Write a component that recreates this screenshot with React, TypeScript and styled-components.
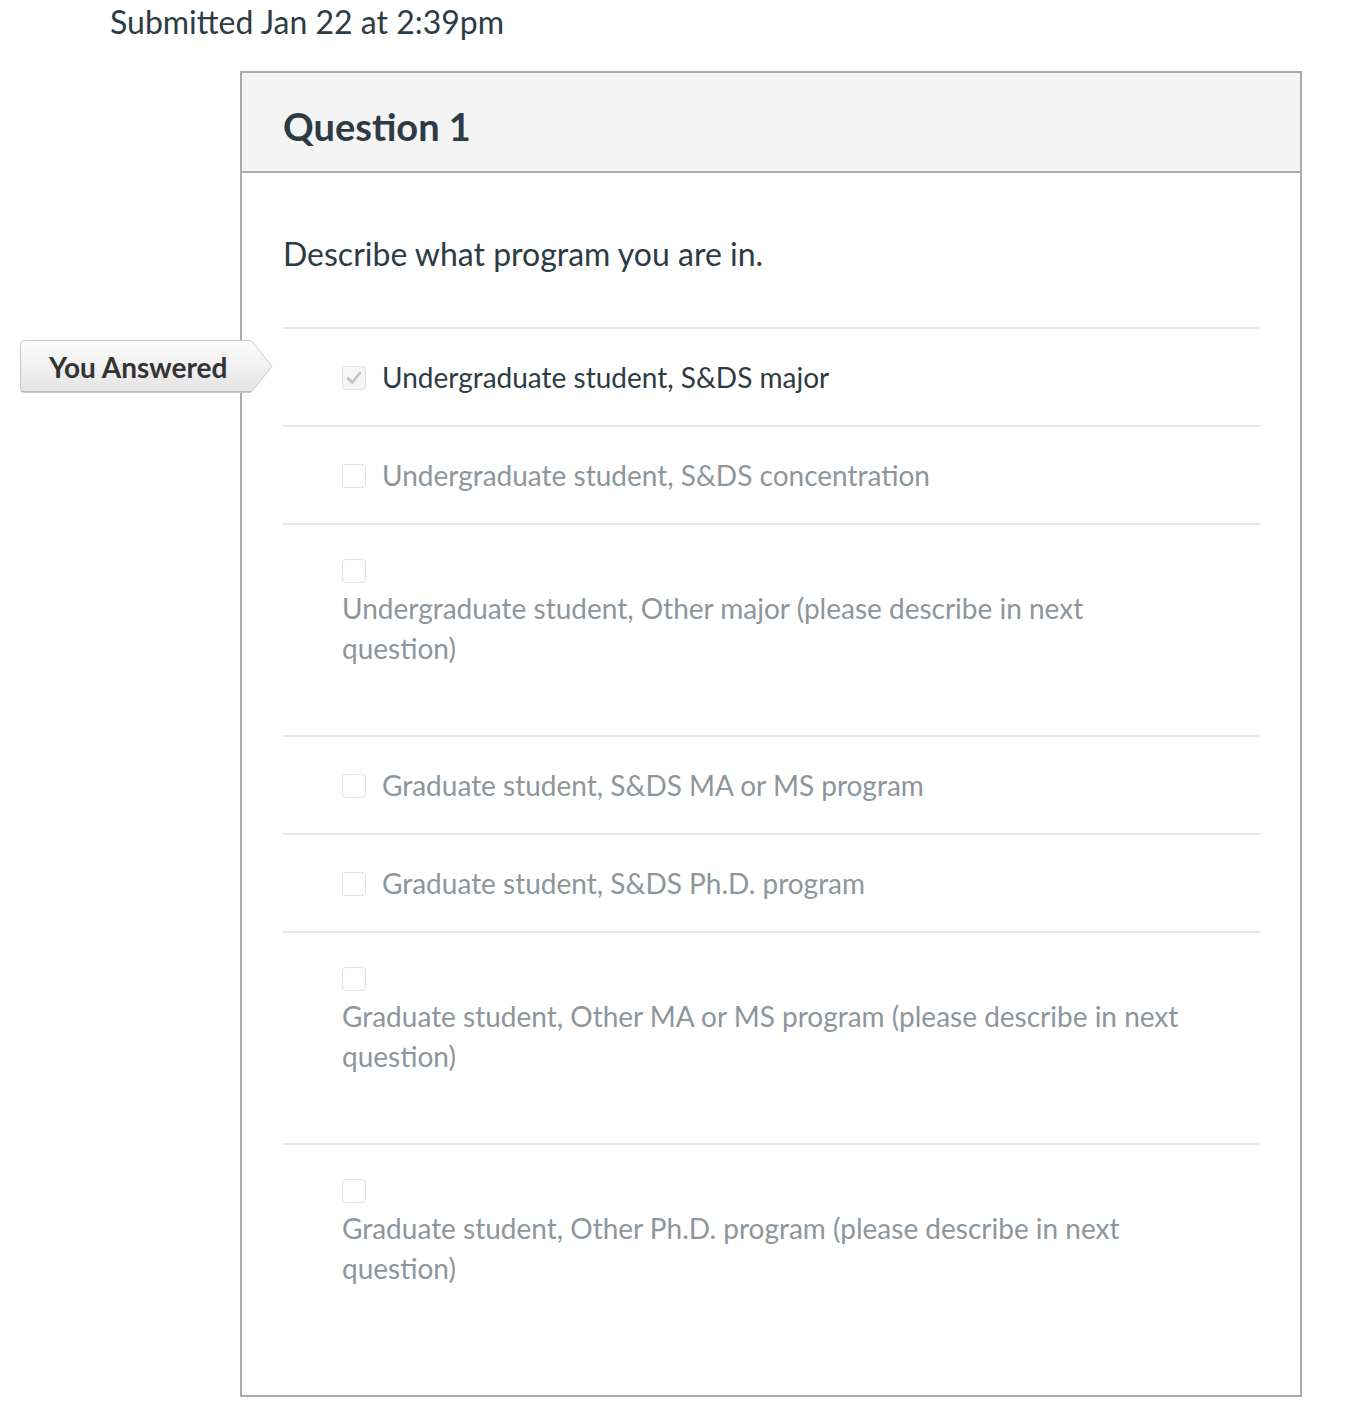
import React from "react";
import styled, { createGlobalStyle } from "styled-components";

const GlobalStyle = createGlobalStyle`
  html, body { margin: 0; padding: 0; background: #ffffff; }
  body { font-family: Lato, "Open Sans", sans-serif; color: #2d3b45; }
`;

const Page = styled.div`
  width: 1350px;
  min-height: 1426px;
`;

const Submitted = styled.div`
  padding: 2px 0 0 110px;
  font-size: 32px;
  line-height: 40px;
  color: #2d3b45;
  margin-bottom: 29px;
`;

const Card = styled.section`
  box-sizing: border-box;
  margin-left: 240px;
  width: 1062px;
  border: 2px solid #aaaaaa;
`;

const Header = styled.header`
  box-sizing: border-box;
  height: 100px;
  padding: 31px 0 0 41px;
  background: #f4f4f4;
  border-bottom: 2px solid #aaaaaa;
`;

const Title = styled.h2`
  margin: 0;
  font-size: 38px;
  line-height: 44px;
  font-weight: 700;
  color: #2d3b45;
`;

const Body = styled.div`
  padding: 61px 40px 40px 41px;
`;

const Prompt = styled.p`
  margin: 0 0 53px;
  font-size: 32px;
  line-height: 40px;
  color: #2d3b45;
`;

const AnswerList = styled.div`
  display: flex;
  flex-direction: column;
`;

const Answer = styled.div<{ $wrapped?: boolean }>`
  position: relative;
  display: flex;
  flex-wrap: wrap;
  align-items: center;
  column-gap: 16px;
  border-top: 2px solid #e6e6e6;
  padding: 28px 0 ${(p) => (p.$wrapped ? "67px" : "28px")} 59px;
`;

const Box = styled.span<{ $checked?: boolean }>`
  box-sizing: border-box;
  display: inline-flex;
  align-items: center;
  justify-content: center;
  width: 24px;
  height: 24px;
  margin: 6px 0 5px;
  border: 1px solid #e1e1e1;
  border-radius: 4px;
  background: ${(p) => (p.$checked ? "#f6f6f6" : "#ffffff")};
`;

const Label = styled.span<{ $selected?: boolean; $wrapped?: boolean }>`
  box-sizing: border-box;
  flex: ${(p) => (p.$wrapped ? "0 0 100%" : "0 1 auto")};
  padding-right: ${(p) => (p.$wrapped ? "70px" : "0")};
  font-size: 28px;
  line-height: 40px;
  color: ${(p) => (p.$selected ? "#2d3b45" : "#8d969c")};
`;

const Badge = styled.div`
  position: absolute;
  left: -263px;
  top: 11px;
  width: 253px;
  height: 54px;
  display: flex;
  align-items: center;
`;

const BadgeShape = styled.svg`
  position: absolute;
  inset: 0;
`;

const BadgeText = styled.span`
  position: relative;
  padding-left: 29px;
  font-size: 28px;
  font-weight: 700;
  color: #333333;
  line-height: 1;
`;

const answers: { text: string; selected?: boolean; wrapped?: boolean }[] = [
  { text: "Undergraduate student, S&DS major", selected: true },
  { text: "Undergraduate student, S&DS concentration" },
  { text: "Undergraduate student, Other major (please describe in next question)", wrapped: true },
  { text: "Graduate student, S&DS MA or MS program" },
  { text: "Graduate student, S&DS Ph.D. program" },
  { text: "Graduate student, Other MA or MS program (please describe in next question)", wrapped: true },
  { text: "Graduate student, Other Ph.D. program (please describe in next question)", wrapped: true },
];

const Check = () => (
  <svg width="16" height="14" viewBox="0 0 16 14">
    <path d="M2 7.5 L6.2 11.5 L14 2" fill="none" stroke="#c2c2c2" strokeWidth="2.6" strokeLinecap="round" strokeLinejoin="round" />
  </svg>
);

const YouAnswered = () => (
  <Badge>
    <BadgeShape width="253" height="54" viewBox="0 0 253 54">
      <defs>
        <linearGradient id="bg" x1="0" y1="0" x2="0" y2="1">
          <stop offset="0" stopColor="#fdfdfd" />
          <stop offset="1" stopColor="#e3e3e3" />
        </linearGradient>
      </defs>
      <path
        d="M4.5 0.5 H231 L252 26.5 L231 52.5 H4.5 Q0.5 52.5 0.5 48.5 V4.5 Q0.5 0.5 4.5 0.5 Z"
        fill="url(#bg)"
        stroke="#c8c8c8"
        strokeWidth="1"
      />
      <path d="M1.5 51.5 H231" stroke="#b9b9b9" strokeWidth="1.2" fill="none" />
    </BadgeShape>
    <BadgeText>You Answered</BadgeText>
  </Badge>
);

export default function App() {
  return (
    <Page>
      <GlobalStyle />
      <Submitted>Submitted Jan 22 at 2:39pm</Submitted>
      <Card>
        <Header>
          <Title>Question 1</Title>
        </Header>
        <Body>
          <Prompt>Describe what program you are in.</Prompt>
          <AnswerList>
            {answers.map((a) => (
              <Answer key={a.text} $wrapped={a.wrapped}>
                {a.selected && <YouAnswered />}
                <Box $checked={a.selected}>{a.selected && <Check />}</Box>
                <Label $selected={a.selected} $wrapped={a.wrapped}>
                  {a.text}
                </Label>
              </Answer>
            ))}
          </AnswerList>
        </Body>
      </Card>
    </Page>
  );
}
